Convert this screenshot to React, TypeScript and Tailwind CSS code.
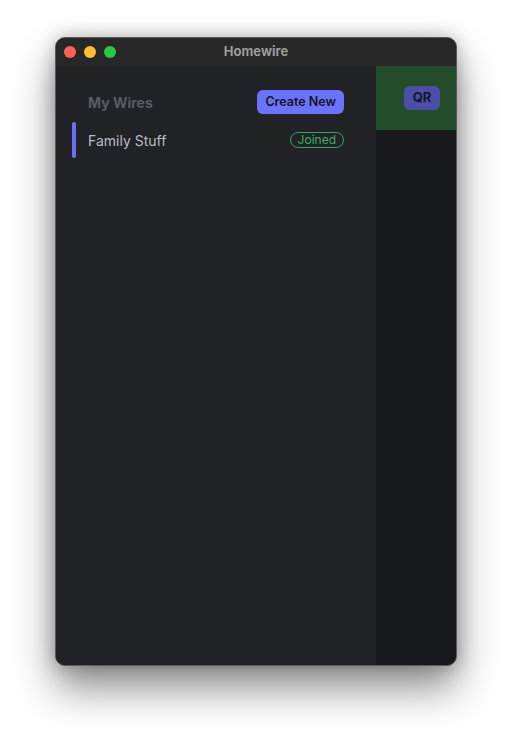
export default function App() {
  return (
    <div
      className="w-[512px] h-[740px] bg-white pt-[37px] pl-[55px]"
      style={{ fontFamily: 'Inter, "Noto Sans", sans-serif' }}
    >
      <div className="w-[402px] h-[629px] rounded-[10px] border border-[#5a5a5a] bg-[#202226] overflow-hidden flex flex-col shadow-[0_22px_40px_rgba(0,0,0,0.45),0_0_18px_rgba(0,0,0,0.25)]">
        <div className="relative h-[28px] bg-[#272727] flex items-center px-[8px] gap-[8px] shrink-0">
          <span className="w-[12px] h-[12px] rounded-full bg-[#fe5f57]" />
          <span className="w-[12px] h-[12px] rounded-full bg-[#febc2e]" />
          <span className="w-[12px] h-[12px] rounded-full bg-[#28c840]" />
          <div className="absolute inset-0 flex items-center justify-center text-[13px] font-bold text-[#9b9b9b] pointer-events-none">
            Homewire
          </div>
        </div>
        <div className="flex flex-1 min-h-0">
          <div className="w-[320px] bg-[#202226] pt-[24px]">
            <div className="flex items-center justify-between px-[32px] h-[24px]">
              <span className="text-[14px] font-bold text-[#575b62]">My Wires</span>
              <button className="h-[24px] px-[8px] rounded-[6px] bg-[#6c73fb] text-[12.5px] font-semibold text-[#14151f]">
                Create New
              </button>
            </div>
            <div className="mt-[8px] flex items-center h-[36px] pl-[16px] pr-[32px]">
              <span className="w-[4px] h-[36px] rounded-full bg-[#6b6ef7]" />
              <span className="ml-[12px] flex-1 text-[14px] text-[#b8bcc4]">Family Stuff</span>
              <span className="h-[16px] px-[7px] rounded-full border border-[#33a35f] text-[12px] leading-[14px] text-[#3cae68]">
                Joined
              </span>
            </div>
          </div>
          <div className="flex-1 bg-[#17191c]">
            <div className="h-[64px] bg-[#234c2b] flex items-center pl-[28px]">
              <button className="w-[36px] h-[24px] rounded-[6px] bg-[#4a4ea6] text-[13px] font-bold text-[#14172a]">
                QR
              </button>
            </div>
          </div>
        </div>
      </div>
    </div>
  );
}
